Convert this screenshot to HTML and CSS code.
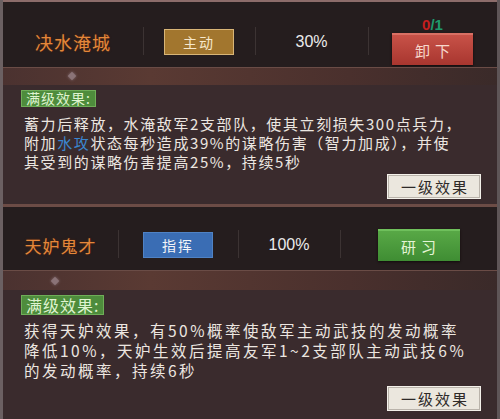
FILE: index.html
```html
<!DOCTYPE html>
<html lang="zh-CN">
<head>
<meta charset="UTF-8">
<meta name="viewport" content="width=device-width, initial-scale=1.0">
<title>战法</title>
<link rel="stylesheet" href="styles.css">
</head>
<body>
<div id="skills">
    <!-- 第一个战法 -->
    <div class="skill skill-first">
        <div class="skill-head">
            <div class="col col-name">决水淹城</div>
            <div class="col col-type"><span class="tag tag-gold">主动</span></div>
            <div class="col col-rate">30%</div>
            <div class="col col-action">
                <div class="count"><span class="count-used">0</span>/1</div>
                <button class="btn btn-red">卸下</button>
            </div>
        </div>
        <div class="skill-strip"><span class="knot"></span></div>
        <div class="skill-body">
            <div class="label">满级效果:</div>
            <p class="desc">蓄力后释放，水淹敌军2支部队，使其立刻损失300点兵力，<br>附加<span class="water">水攻</span>状态每秒造成39%的谋略伤害（智力加成），并使<br>其受到的谋略伤害提高25%，持续5秒</p>
            <div class="body-foot"><button class="btn-level">一级效果</button></div>
        </div>
    </div>

    <!-- 第二个战法 -->
    <div class="skill skill-second">
        <div class="skill-head">
            <div class="col col-name">天妒鬼才</div>
            <div class="col col-type"><span class="tag tag-blue">指挥</span></div>
            <div class="col col-rate">100%</div>
            <div class="col col-action">
                <button class="btn btn-green">研习</button>
            </div>
        </div>
        <div class="skill-strip"><span class="knot"></span></div>
        <div class="skill-body">
            <div class="label">满级效果:</div>
            <p class="desc">获得天妒效果，有50%概率使敌军主动武技的发动概率<br>降低10%，天妒生效后提高友军1~2支部队主动武技6%<br>的发动概率，持续6秒</p>
            <div class="body-foot"><button class="btn-level">一级效果</button></div>
        </div>
    </div>
</div>
</body>
</html>
```

FILE: styles.css
```css
body {
    margin: 0;
    padding: 0;
    background-color: #2a2122;
    font-family: "Noto Sans CJK SC", "Noto Sans", sans-serif;
    color: #ece6e0;
}
#skills {
    width: 500px;
    height: 419px;
    overflow: hidden;
    box-sizing: border-box;
    border-left: 3px solid #6b6062;
    border-right: 3px solid #5e5557;
}

/* header row */
.skill-head {
    display: flex;
    align-items: flex-start;
    background-color: #251d1e;
    box-sizing: border-box;
}
.skill-first .skill-head {
    height: 67px;
    padding-top: 15px;
    border-top: 2px solid #8c6c6a;
}
.skill-second .skill-head {
    height: 66px;
    padding-top: 13px;
    border-top: 3px solid #6c4c46;
}
.col {
    display: flex;
    justify-content: center;
    align-items: center;
    height: 50px;
    position: relative;
}
.col + .col::before {
    content: "";
    position: absolute;
    left: 0;
    top: 10px;
    width: 1px;
    height: 28px;
    background-color: #3c3333;
}
.skill-first .col-name { width: 140px; }
.skill-first .col-type { width: 112px; }
.skill-first .col-rate { width: 113px; }
.skill-first .col-action { flex: 1; }
.skill-second .col-name { width: 115px; }
.skill-second .col-type { width: 120px; }
.skill-second .col-rate { width: 102px; }
.skill-second .col-action { flex: 1; }

.col-name {
    color: #e4873a;
    font-size: 18px;
    letter-spacing: 1px;
    text-shadow: 0 0 2px #5a2a10;
}
.skill-second .col-name {
    font-size: 17px;
}
.col-rate {
    font-family: "Liberation Sans", sans-serif;
    font-size: 16px;
    color: #ececec;
}
.tag {
    display: inline-block;
    width: 70px;
    height: 26px;
    line-height: 24px;
    text-align: center;
    font-size: 14px;
    letter-spacing: 2px;
    box-sizing: border-box;
}
.tag-gold {
    background-color: #a2762e;
    border: 1px solid #d8b577;
    color: #f6e8cc;
}
.tag-blue {
    background-color: #3a6db4;
    border: 1px solid #4f82c4;
    color: #f2f4f8;
}
.count {
    position: absolute;
    top: 0;
    left: 50%;
    transform: translateX(-50%);
    font-family: "Liberation Sans", sans-serif;
    font-weight: bold;
    font-size: 15px;
    line-height: 16px;
    color: #1f9a6c;
}
.count-used {
    color: #c41e1e;
}
.btn {
    width: 81px;
    height: 32px;
    border: none;
    font-family: "Noto Sans CJK SC", sans-serif;
    font-size: 15px;
    letter-spacing: 5px;
    text-indent: 5px;
    box-shadow: 0 1px 2px #120c0c;
}
.btn-red {
    margin-top: 14px;
    background: linear-gradient(#c85248, #a8362f);
    border-top: 2px solid #d97064;
    color: #f7d8cc;
}
.btn-green {
    width: 82px;
    background: linear-gradient(#58a846, #3f8d33);
    border-top: 2px solid #6fc05c;
    color: #e4f4d6;
}

/* ornament strip under the header */
.skill-strip {
    height: 18px;
    position: relative;
    background: linear-gradient(to right, #4b3230, #5a3a33 30%, #4a302d 70%, #3a2a29);
    border-top: 1px solid #6a4c46;
    box-sizing: border-box;
}
.skill-second .skill-strip {
    height: 20px;
}
.knot {
    position: absolute;
    top: 5px;
    left: 66px;
    width: 6px;
    height: 6px;
    background-color: #8a7377;
    transform: rotate(45deg);
    box-shadow: 0 0 3px #8a7377;
}
.skill-second .knot {
    left: 49px;
    top: 7px;
}

/* description */
.skill-body {
    background-color: #3a2b2d;
    padding: 5px 0 0 18px;
    box-sizing: border-box;
}
.skill-first .skill-body {
    height: 119px;
}
.skill-second .skill-body {
    height: 130px;
}
.label {
    width: fit-content;
    background-color: #4e8c3c;
    border: 1px solid #6fae58;
    color: #dff3cf;
    font-size: 14px;
    letter-spacing: 1px;
    padding: 0 4px;
    line-height: 15px;
}
.skill-second .label {
    font-size: 16px;
    line-height: 18px;
}
.desc {
    margin: 7px 0 0 3px;
    font-size: 15px;
    line-height: 19px;
    letter-spacing: 1.6px;
    white-space: nowrap;
}
.skill-second .desc {
    margin-top: 5px;
    font-size: 15.5px;
    line-height: 20px;
    letter-spacing: 2.5px;
}
.water {
    color: #3a86cf;
}
.body-foot {
    display: flex;
    justify-content: flex-end;
    padding-right: 17px;
    margin-top: 4px;
}
.skill-second .body-foot {
    margin-top: 7px;
}
.btn-level {
    width: 92px;
    height: 23px;
    padding: 0;
    background-color: #ebe7de;
    border: 1px solid #b9b3aa;
    outline: 1px solid #f4f1ea;
    font-family: "Noto Sans CJK SC", sans-serif;
    font-size: 15px;
    line-height: 21px;
    letter-spacing: 2px;
    text-indent: 2px;
    color: #2e2a28;
}
```
